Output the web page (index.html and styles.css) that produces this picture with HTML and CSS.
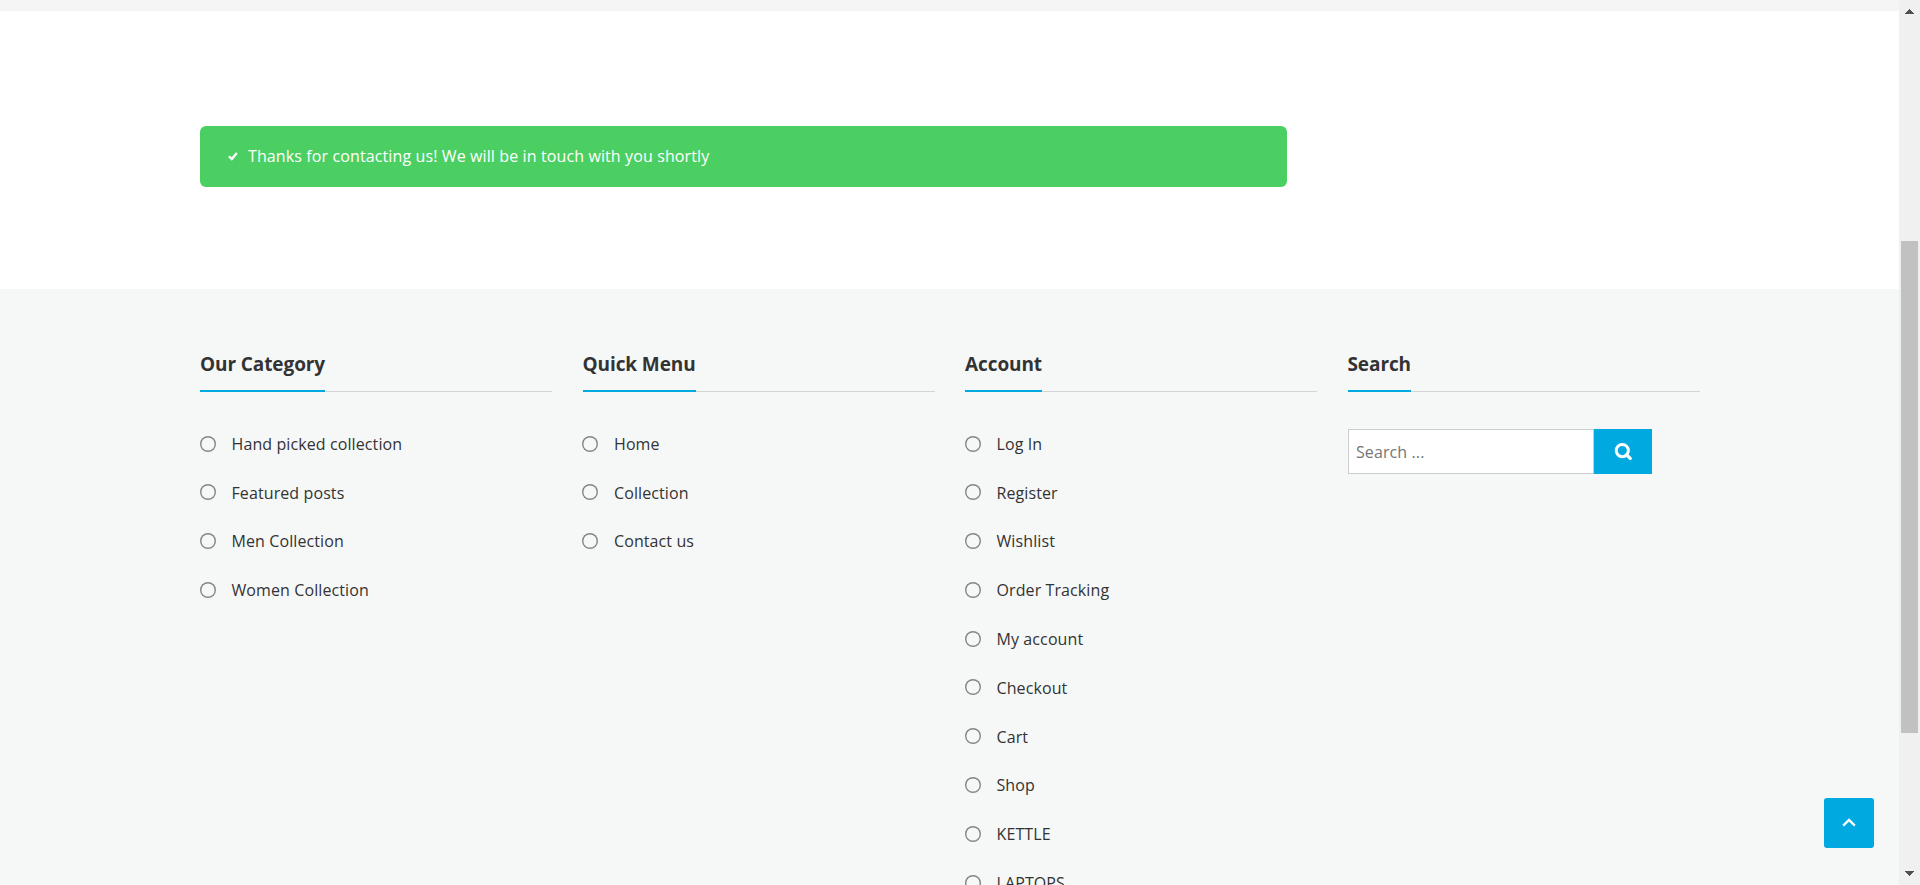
FILE: index.html
```html
<!DOCTYPE html>
<html lang="en">
<head>
<meta charset="utf-8">
<title>Contact us</title>
<link rel="stylesheet" href="styles.css">
</head>
<body>
<div class="viewport">
  <div class="page">
    <div class="page-header"></div>
    <main class="content">
      <div class="alert">
        <svg class="alert-icon" viewBox="0 0 10 9"><path d="M1 4.4 3.8 7 8.8 1" fill="none" stroke="#fff" stroke-width="2.3"/></svg>
        <span>Thanks for contacting us! We will be in touch with you shortly</span>
      </div>
    </main>
    <footer class="footer">
      <section class="widget">
        <h2 class="widget-title"><span>Our Category</span></h2>
        <ul class="menu">
          <li>Hand picked collection</li>
          <li>Featured posts</li>
          <li>Men Collection</li>
          <li>Women Collection</li>
        </ul>
      </section>
      <section class="widget">
        <h2 class="widget-title"><span>Quick Menu</span></h2>
        <ul class="menu">
          <li>Home</li>
          <li>Collection</li>
          <li>Contact us</li>
        </ul>
      </section>
      <section class="widget">
        <h2 class="widget-title"><span>Account</span></h2>
        <ul class="menu">
          <li>Log In</li>
          <li>Register</li>
          <li>Wishlist</li>
          <li>Order Tracking</li>
          <li>My account</li>
          <li>Checkout</li>
          <li>Cart</li>
          <li>Shop</li>
          <li>KETTLE</li>
          <li>LAPTOPS</li>
        </ul>
      </section>
      <section class="widget">
        <h2 class="widget-title"><span>Search</span></h2>
        <form class="search">
          <input class="search-field" type="search" placeholder="Search ...">
          <button class="search-button" type="button" aria-label="Search">
            <svg width="18" height="18" viewBox="0 0 18 18" fill="none" stroke="#fff"><circle cx="8.3" cy="7.6" r="6.1" stroke-width="3"/><path d="M12.6 11.9 16.2 15.4" stroke-width="3.3" stroke-linecap="round"/></svg>
          </button>
        </form>
      </section>
    </footer>
  </div>
  <div class="scrollbar">
    <svg width="9" height="5" viewBox="0 0 9 5" shape-rendering="crispEdges"><path d="M0 5 4.5 0 9 5z" fill="#505050"/></svg>
    <div class="scrollbar-thumb"></div>
    <svg width="9" height="5" viewBox="0 0 9 5" shape-rendering="crispEdges"><path d="M0 0 4.5 5 9 0z" fill="#505050"/></svg>
  </div>
  <button class="to-top" type="button" aria-label="Back to top">
    <svg width="14" height="9" viewBox="0 0 14 9"><path d="M1.2 7.6 7 1.9 12.8 7.6" fill="none" stroke="#fff" stroke-width="2.3"/></svg>
  </button>
</div>
</body>
</html>
```
FILE: styles.css
```css
*,
*::before {
  box-sizing: border-box;
}

body {
  margin: 0;
  font: 16px/28.8px "Open Sans", sans-serif;
  color: #333;
}

.viewport {
  position: relative;
  display: flex;
  height: 885px;
  overflow: hidden;
}

.page {
  flex: 1;
  height: 885px;
  overflow: hidden;
  background: #fff;
}

.page-header {
  height: 11px;
  background: #f5f5f5;
}

.content {
  height: 278px;
  padding: 115px 200px 0;
}

.alert {
  display: flex;
  align-items: center;
  gap: 10.5px;
  width: 1087px;
  height: 61px;
  padding: 0 27.5px;
  border-radius: 6px;
  background: #4bcf63;
  color: #fff;
  letter-spacing: 0.115px;
}

.alert-icon {
  width: 10px;
  height: 9px;
  margin-bottom: 1px;
}

.footer {
  display: grid;
  grid-template-columns: repeat(4, 352px);
  gap: 30.5px;
  height: 800px;
  padding: 61px 0 0 200px;
  background: #f6f8f8;
}

.widget-title {
  display: flex;
  height: 42px;
  margin: 0 0 37px;
  font-size: 19px;
  line-height: 29px;
  font-weight: 700;
  letter-spacing: -0.09px;
  box-shadow: inset 0 -1px #d3d5d5;
}

.widget-title span {
  border-bottom: 2px solid #00a9e0;
}

.menu {
  margin: 0;
  padding: 0.8px 0 0;
  list-style: none;
  letter-spacing: 0.1px;
}

.menu li {
  display: flex;
  align-items: center;
  gap: 16px;
  margin-bottom: 20px;
}

.menu li::before {
  content: "";
  width: 16px;
  height: 16px;
  margin: 0 0 1.4px -0.5px;
  border-radius: 50%;
  box-shadow: inset 0 0 0 1.4px #858585;
}

.search {
  display: flex;
  height: 45px;
}

.search-field {
  width: 246px;
  padding: 1px 7.5px 0;
  border: 1px solid #ccc;
  border-radius: 0;
  background: #fff;
  font: inherit;
  letter-spacing: 0.1px;
  appearance: none;
}

.search-field::placeholder {
  color: #757575;
}

.search-button {
  display: flex;
  align-items: center;
  justify-content: center;
  width: 58px;
  padding: 0;
  border: 0;
  background: #00a9e0;
}

.scrollbar {
  display: flex;
  flex-direction: column;
  align-items: center;
  width: 21px;
  padding: 9px 0;
  background: #f0f0f0;
}

.scrollbar-thumb {
  width: 17px;
  height: 492px;
  margin: 227px 0 138px;
  background: #c1c1c1;
}

.to-top {
  position: absolute;
  right: 46px;
  bottom: 37px;
  display: flex;
  align-items: center;
  justify-content: center;
  width: 50px;
  height: 50px;
  padding: 0 0 2px;
  border: 0;
  border-radius: 3px;
  background: #00a9e0;
}
```
